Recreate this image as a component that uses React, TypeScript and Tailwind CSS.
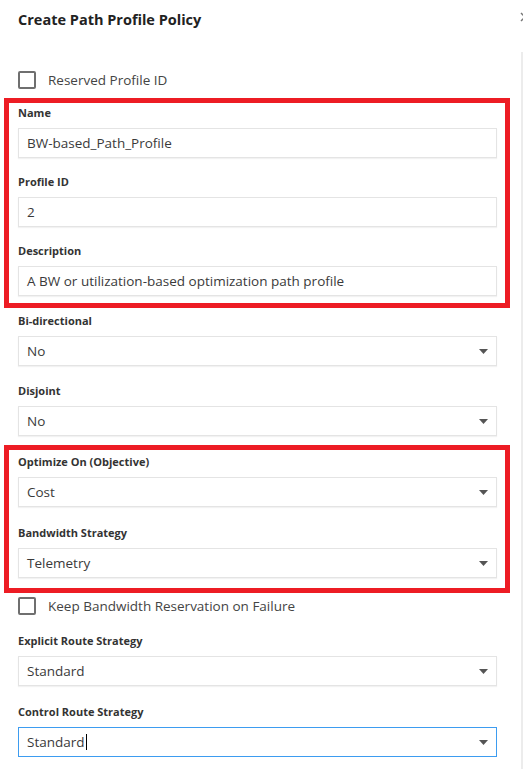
import React from "react";

const Caret = () => (
  <svg width="9" height="5" viewBox="0 0 9 5" className="shrink-0">
    <path d="M0 0H9L4.5 5Z" fill="#555" />
  </svg>
);

function Label({ children, className = "" }: { children: React.ReactNode; className?: string }) {
  return (
    <div className={`h-[16px] leading-[16px] text-[11px] font-bold text-[#333] mb-[7px] ${className}`}>
      {children}
    </div>
  );
}

function TextBox({ value }: { value: string }) {
  return (
    <div className="h-[30px] w-[479px] border border-[#e4e4e4] shadow-[0_1px_1px_rgba(0,0,0,0.05)] bg-white flex items-center pl-[8px] text-[13.5px] text-[#3a3a3a]">
      {value}
    </div>
  );
}

function Select({ value, focused = false }: { value: string; focused?: boolean }) {
  return (
    <div
      className={`h-[30px] w-[479px] bg-white flex items-center justify-between pl-[8px] pr-[8px] text-[13.5px] text-[#3a3a3a] ${
        focused
          ? "border-[1.5px] border-[#3d9cf0]"
          : "border border-[#e4e4e4] shadow-[0_1px_1px_rgba(0,0,0,0.05)]"
      }`}
    >
      <span className="flex items-center">
        {value}
        {focused && <span className="inline-block w-[1px] h-[16px] bg-black ml-[1px]" />}
      </span>
      <Caret />
    </div>
  );
}

function Checkbox({ label, className = "" }: { label: string; className?: string }) {
  return (
    <div className={`flex items-center h-[18px] ml-[18px] ${className}`}>
      <div className="w-[18px] h-[18px] border-2 border-[#6f6f6f] rounded-[2px] bg-white" />
      <span className="ml-[12px] text-[13.5px] text-[#444]">{label}</span>
    </div>
  );
}

export default function App() {
  return (
    <div className="relative w-[523px] h-[769px] overflow-hidden bg-white flex font-['Open_Sans',sans-serif]">
      <div className="w-[521px] flex flex-col">
        {/* Header */}
        <div className="pt-[9px] pl-[18px] h-[31px] leading-[22px] text-[14.5px] font-bold text-[#222]">
          Create Path Profile Policy
        </div>

        <Checkbox label="Reserved Profile ID" className="mt-[40px]" />

        {/* Highlighted: identity */}
        <div className="mt-[9px] ml-[4px] w-[506px] border-[5px] border-[#ed1c24] pt-[2px] pb-[7px] pl-[9px]">
          <Label>Name</Label>
          <TextBox value="BW-based_Path_Profile" />
          <Label className="mt-[16px]">Profile ID</Label>
          <TextBox value="2" />
          <Label className="mt-[16px]">Description</Label>
          <TextBox value="A BW or utilization-based optimization path profile" />
        </div>

        <div className="pl-[18px]">
          <Label className="mt-[5px]">Bi-directional</Label>
          <Select value="No" />
          <Label className="mt-[17px]">Disjoint</Label>
          <Select value="No" />
        </div>

        {/* Highlighted: optimization */}
        <div className="mt-[9px] ml-[4px] w-[506px] border-[5px] border-[#ed1c24] pt-[4px] pb-[10px] pl-[9px]">
          <Label>Optimize On (Objective)</Label>
          <Select value="Cost" />
          <Label className="mt-[18px]">Bandwidth Strategy</Label>
          <Select value="Telemetry" />
        </div>

        <Checkbox label="Keep Bandwidth Reservation on Failure" className="mt-[4px]" />

        <div className="pl-[18px]">
          <Label className="mt-[18px]">Explicit Route Strategy</Label>
          <Select value="Standard" />
          <Label className="mt-[18px]">Control Route Strategy</Label>
          <Select value="Standard" focused />
        </div>
      </div>

      {/* scroll track */}
      <div className="w-[2px] mt-[52px] bg-[#ececec]" />

      {/* close button, clipped by the panel edge */}
      <svg width="10" height="10" viewBox="0 0 10 10" className="absolute left-[520px] top-[12px]">
        <path d="M1 1L9 9M9 1L1 9" stroke="#777" strokeWidth="1.5" />
      </svg>
    </div>
  );
}
